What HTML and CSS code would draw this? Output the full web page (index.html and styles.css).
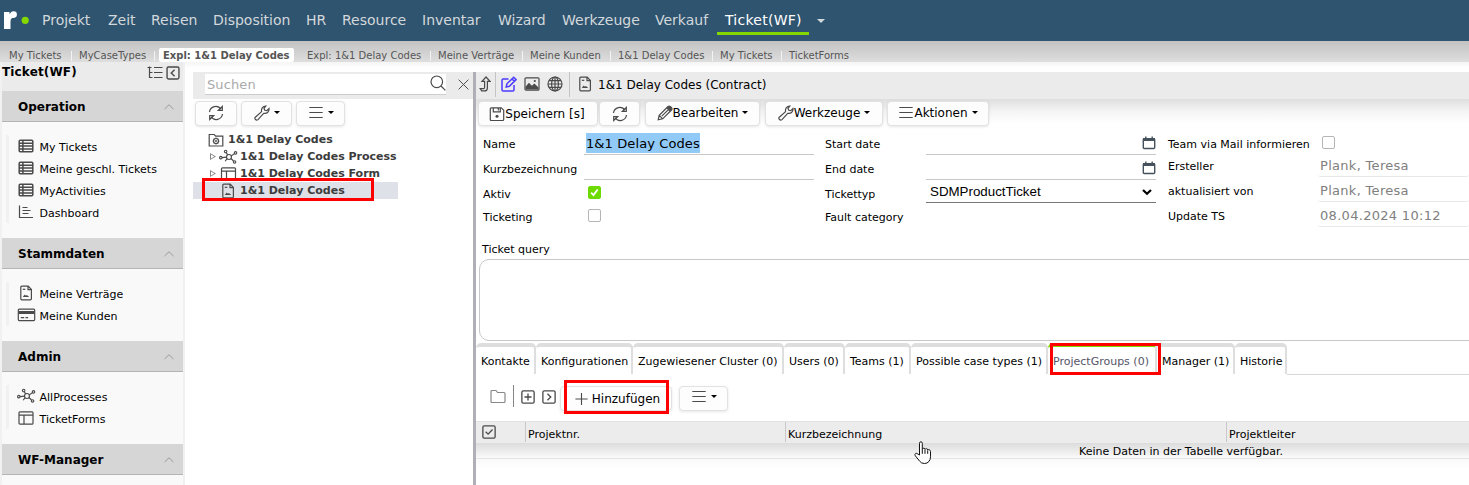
FILE: index.html
```
<!DOCTYPE html>
<html lang="de">
  <head>
    <meta charset="UTF-8" />
    <meta name="viewport" content="width=device-width, initial-scale=1.0" />
    <title>1&amp;1 Delay Codes (Contract)</title>
    <link rel="stylesheet" href="styles.css">
  </head>
  <body>
    <!-- icon set -->
    <svg class="sprite" aria-hidden="true">
      <symbol id="refresh" viewBox="0 0 16 16">
        <path d="M1.5 7A6.3 6.3 0 0 1 13 4.3M14.5 9A6.3 6.3 0 0 1 3 11.7" />
        <path d="M14.3 1.5v4h-4zM1.7 14.5v-4h4z" />
      </symbol>
      <symbol id="wrench" viewBox="0 0 16 16">
        <path d="M1.3 12.2 7.6 6.6C7 4 8.6 1.2 11.8 1L10 3.3l.8 2 2 .4L15 3.6c.4 3.4-2.4 5.4-5.3 4.7L4 14.6c-1.8 1.4-4-.8-2.7-2.4z" />
      </symbol>
      <symbol id="menu" viewBox="0 0 16 16">
        <path d="M1.3 2.5h13.4M1.3 7.5h13.4M1.3 12.5h13.4" />
      </symbol>
      <symbol id="table" viewBox="0 0 16 16">
        <rect x="1.2" y="2.2" width="13.6" height="11.6" rx="1" />
        <path d="M1 5.2h14M1 8.1h14M1 11h14M4.9 2v12" />
      </symbol>
      <symbol id="chart" viewBox="0 0 16 16">
        <path d="M1.5 1.5v12H15M4.5 3.5h5M4.5 6.5h8M4.5 9.5h6" />
      </symbol>
      <symbol id="doc" viewBox="0 0 16 16">
        <path d="M3.8 1.2h6.4l3.2 3.3v9.3q0 1-1 1H3.8q-1 0-1-1V2.2q0-1 1-1zM10 1.2v3.5h3.4" />
        <path class="solid" d="M4.8 12l1.9-2.4 1.2 1.2 1-.7 2.3 1.9z" />
        <path d="M4.8 4.3h2.5" />
      </symbol>
      <symbol id="card" viewBox="0 0 18 16">
        <rect x=".8" y="2.2" width="16.4" height="11.4" rx="1" />
        <path class="solid" d="M1 4h16v3H1z" />
        <path d="M3.3 10.7h3.4M8 10.7h2.6" />
      </symbol>
      <symbol id="process" viewBox="0 0 20 16">
        <circle cx="10.5" cy="8" r="2.6" />
        <circle cx="1.9" cy="8.7" r="1.3" />
        <circle cx="7" cy="2.2" r="1.3" />
        <circle cx="17.4" cy="3.7" r="1.3" />
        <circle cx="16.4" cy="13.2" r="1.3" />
        <path d="M3.2 8.6l4.6-.4M7.6 3.4l1.5 2.3M12.9 6.8l3.3-2.3M12.6 9.6l2.7 2.6M8.5 9.7l-2 2.8" />
      </symbol>
      <symbol id="form" viewBox="0 0 16 16">
        <rect x="1" y="1.8" width="14" height="12.4" rx="1" />
        <path d="M1 5.2h14M6 5.2v9" />
      </symbol>
      <symbol id="folderGear" viewBox="0 0 16 16">
        <path d="M1.2 14V2.5h5l1.5 1.7h7.1V14z" />
        <circle cx="8" cy="9" r="2.5" />
        <path d="M8 5.6v1M8 11.4v1M4.6 9h1M10.4 9h1M5.7 6.7l.6.6M9.7 10.7l.6.6M10.3 6.7l-.6.6M6.3 10.7l-.6.6" />
        <circle cx="8" cy="9" r=".4" />
      </symbol>
      <symbol id="folder" viewBox="0 0 16 16">
        <path d="M1 12.5v-10q0-1 1-1h4l1.6 2H14q1 0 1 1v8q0 1-1 1H2q-1 0-1-1z" />
      </symbol>
      <symbol id="search" viewBox="0 0 16 16">
        <circle cx="6.8" cy="6.8" r="5.8" />
        <path d="M11 11l4.4 4.4" />
      </symbol>
      <symbol id="close" viewBox="0 0 16 16">
        <path d="M2 2l12 12M14 2L2 14" />
      </symbol>
      <symbol id="chevron" viewBox="0 0 16 16">
        <path d="M2 10.8 8 5l6 5.8" />
      </symbol>
      <symbol id="treeList" viewBox="0 0 16 16">
        <path d="M2.5 1.5v11h3M2.5 7.5h3M.5 2.5h4M7 2.5h8.500M7 7.5h8.500M7 12.5h8.500" />
      </symbol>
      <symbol id="boxLeft" viewBox="0 0 16 16">
        <rect x="1.2" y="1.2" width="13.6" height="13.6" rx="1.6" />
        <path d="M9.8 4.3 6 8l3.8 3.7" />
      </symbol>
      <symbol id="boxRight" viewBox="0 0 16 16">
        <rect x="1" y="1" width="14" height="14" rx="1.6" />
        <path d="M6.2 4.3 10 8l-3.8 3.7" />
      </symbol>
      <symbol id="boxPlus" viewBox="0 0 16 16">
        <rect x="1" y="1" width="14" height="14" rx="1.6" />
        <path d="M8 4v8M4 8h8" />
      </symbol>
      <symbol id="boxCheck" viewBox="0 0 16 16">
        <rect x="1" y="1" width="14" height="14" rx="1.6" />
        <path d="M4.2 7.7 7 10.4l5-5.3" />
      </symbol>
      <symbol id="plus" viewBox="0 0 16 16">
        <path d="M8 1.5v13M1.5 8h13" />
      </symbol>
      <symbol id="levelUp" viewBox="0 0 12 16">
        <path d="M7 1 3 5.3h2.6v6.2q0 1.2-1.2 1.2H1.2l1.5 2.2h2.7q3 0 3-3V5.3H11z" />
      </symbol>
      <symbol id="edit" viewBox="0 0 16 16">
        <path d="M7.5 3H2.2Q1 3 1 4.2v9.6Q1 15 2.2 15h9.6q1.2 0 1.2-1.2V9" />
        <path d="M5.2 11l.7-3.2 6.8-6.5 2.3 2.3-6.6 6.7zM11 3l2.3 2.3" />
      </symbol>
      <symbol id="image" viewBox="0 0 16 16">
        <rect x="1" y="1.8" width="14" height="12.4" rx="1" />
        <path class="solid" d="M1.5 13.5v-2.7l3.4-4 3 3 2.5-2.2 4.1 3.9v2z" />
        <circle class="solid" cx="10.8" cy="5" r="1.1" />
      </symbol>
      <symbol id="globe" viewBox="0 0 16 16">
        <circle cx="8" cy="8" r="7" />
        <ellipse cx="8" cy="8" rx="3.4" ry="7" />
        <path d="M8 1v14M1 8h14M2 4.6h12M2 11.4h12" />
      </symbol>
      <symbol id="save" viewBox="0 0 16 16">
        <path d="M2.3 1.8h10l2.4 2.4v9.3q0 1-1 1H2.3q-1 0-1-1V2.8q0-1 1-1zM4.3 1.8v4.1h7V1.8M9.3 2.5v2" />
        <circle class="solid" cx="8" cy="10.2" r="1.5" />
      </symbol>
      <symbol id="pencil" viewBox="0 0 16 16">
        <path d="M1.2 14.8l1-4.5L11 1.5q1.2-1 2.3 0l1.2 1.2q1 1.2 0 2.3l-8.8 8.8zM2.2 10.3l3.5 3.5M9.8 2.8l3.5 3.5M4.8 11.2l6.4-6.4" />
        <path class="solid" d="M10 2.6l1.8-1.4 1.4.1 1.5 1.8-.2 1.5-1.2 1.4z" />
      </symbol>
      <symbol id="calendar" viewBox="0 0 14 14">
        <path d="M2.3 2.7h9.4q1 0 1 1v7.8q0 1-1 1H2.3q-1 0-1-1V3.7q0-1 1-1z" />
        <path class="solid" d="M1 2h12v3H1z" />
        <path d="M3.8.5v2M10.2.5v2" />
      </symbol>
    </svg>

    <header class="mainNav">
      <svg class="logo" viewBox="0 0 28 20">
        <path class="logoR" d="M1 1h5.500v2L9 1.500l2.500 5q-4 0-4 4V18H1z" />
        <circle class="logoR" cx="10.600" cy="3.600" r="3.300" />
        <circle class="logoDot" cx="22.200" cy="9.300" r="3.600" />
      </svg>
      <nav class="navItems">
        <a>Projekt</a>
        <a>Zeit</a>
        <a>Reisen</a>
        <a>Disposition</a>
        <a>HR</a>
        <a>Resource</a>
        <a>Inventar</a>
        <a>Wizard</a>
        <a>Werkzeuge</a>
        <a>Verkauf</a>
        <a class="active">Ticket(WF)</a>
      </nav>
      <span class="caret"></span>
    </header>

    <div class="history">
      <a>My Tickets</a>
      <a>MyCaseTypes</a>
      <a class="current">Expl: 1&amp;1 Delay Codes</a>
      <a>Expl: 1&amp;1 Delay Codes</a>
      <a>Meine Verträge</a>
      <a>Meine Kunden</a>
      <a>1&amp;1 Delay Codes</a>
      <a>My Tickets</a>
      <a>TicketForms</a>
    </div>

    <div class="workspace">
      <aside class="sidebar">
        <div class="sideTitle">
          <span>Ticket(WF)</span>
          <svg class="icon"><use href="#treeList" /></svg>
          <svg class="icon dark"><use href="#boxLeft" /></svg>
        </div>
        <h2>Operation <svg><use href="#chevron" /></svg></h2>
        <ul>
          <li><svg class="icon bold"><use href="#table" /></svg>My Tickets</li>
          <li><svg class="icon bold"><use href="#table" /></svg>Meine geschl. Tickets</li>
          <li><svg class="icon bold"><use href="#table" /></svg>MyActivities</li>
          <li><svg class="icon"><use href="#chart" /></svg>Dashboard</li>
        </ul>
        <h2>Stammdaten <svg><use href="#chevron" /></svg></h2>
        <ul>
          <li><svg class="icon"><use href="#doc" /></svg>Meine Verträge</li>
          <li><svg class="icon wide"><use href="#card" /></svg>Meine Kunden</li>
        </ul>
        <h2>Admin <svg><use href="#chevron" /></svg></h2>
        <ul>
          <li><svg class="icon wide"><use href="#process" /></svg>AllProcesses</li>
          <li><svg class="icon"><use href="#form" /></svg>TicketForms</li>
        </ul>
        <h2>WF-Manager <svg><use href="#chevron" /></svg></h2>
      </aside>

      <section class="explorer">
        <div class="searchBar">
          <div class="searchField">
            <span>Suchen</span>
            <svg class="icon"><use href="#search" /></svg>
          </div>
          <svg class="icon closeIcon"><use href="#close" /></svg>
        </div>
        <div class="treeButtons">
          <button class="btn"><svg class="icon"><use href="#refresh" /></svg></button>
          <button class="btn"><svg class="icon"><use href="#wrench" /></svg><i class="caret"></i></button>
          <button class="btn"><svg class="icon"><use href="#menu" /></svg><i class="caret"></i></button>
        </div>
        <div class="tree">
          <div class="node root"><svg class="icon"><use href="#folderGear" /></svg>1&amp;1 Delay Codes</div>
          <div class="node"><i class="expander"></i><svg class="icon wide"><use href="#process" /></svg>1&amp;1 Delay Codes Process</div>
          <div class="node"><i class="expander"></i><svg class="icon wide"><use href="#form" /></svg>1&amp;1 Delay Codes Form</div>
          <div class="node selected"><svg class="icon wide"><use href="#doc" /></svg>1&amp;1 Delay Codes<span class="mark markNode"></span></div>
        </div>
      </section>

      <main class="detail">
        <div class="detailHead">
          <span class="group up"><svg class="icon"><use href="#levelUp" /></svg></span>
          <span class="group tools">
            <svg class="icon blue"><use href="#edit" /></svg>
            <svg class="icon"><use href="#image" /></svg>
            <svg class="icon"><use href="#globe" /></svg>
          </span>
          <svg class="icon"><use href="#doc" /></svg>
          <span class="docTitle">1&amp;1 Delay Codes (Contract)</span>
        </div>

        <div class="actions">
          <button class="btn"><svg class="icon"><use href="#save" /></svg>Speichern [s]</button>
          <button class="btn"><svg class="icon"><use href="#refresh" /></svg></button>
          <button class="btn"><svg class="icon"><use href="#pencil" /></svg>Bearbeiten<i class="caret"></i></button>
          <button class="btn"><svg class="icon"><use href="#wrench" /></svg>Werkzeuge<i class="caret"></i></button>
          <button class="btn"><svg class="icon"><use href="#menu" /></svg>Aktionen<i class="caret"></i></button>
        </div>

        <div class="form">
          <div class="formCol colName">
            <label>Name</label>
            <div class="field"><span class="selection">1&amp;1 Delay Codes</span></div>
            <label>Kurzbezeichnung</label>
            <div class="field"></div>
            <label>Aktiv</label>
            <div><span class="check checked"><svg viewBox="0 0 13 13"><path d="M2.5 6.7l2.8 2.8 5-6.5" /></svg></span></div>
            <label>Ticketing</label>
            <div><span class="check"></span></div>
          </div>
          <div class="formCol colDate">
            <label>Start date</label>
            <div class="field"><svg class="cal"><use href="#calendar" /></svg></div>
            <label>End date</label>
            <div class="field"><svg class="cal"><use href="#calendar" /></svg></div>
            <label>Tickettyp</label>
            <div class="field select">SDMProductTicket<svg viewBox="0 0 12 8"><path d="M2 2l4 3.800L10 2" /></svg></div>
            <label>Fault category</label>
            <div></div>
          </div>
          <div class="formCol colMeta">
            <label>Team via Mail informieren</label>
            <div><span class="check"></span></div>
            <label>Ersteller</label>
            <div class="field readonly">Plank, Teresa</div>
            <label>aktualisiert von</label>
            <div class="field readonly">Plank, Teresa</div>
            <label>Update TS</label>
            <div class="field readonly">08.04.2024 10:12</div>
          </div>
        </div>

        <label class="queryLabel">Ticket query</label>
        <div class="query"></div>

        <div class="tabs">
          <a>Kontakte</a>
          <a>Konfigurationen</a>
          <a>Zugewiesener Cluster (0)</a>
          <a>Users (0)</a>
          <a>Teams (1)</a>
          <a>Possible case types (1)</a>
          <a class="active">ProjectGroups (0)<span class="mark markTab"></span></a>
          <a>Manager (1)</a>
          <a>Historie</a>
          <span class="tabLine"></span>
        </div>

        <div class="tableTools">
          <svg class="icon folder"><use href="#folder" /></svg>
          <span class="divider"></span>
          <svg class="icon box"><use href="#boxPlus" /></svg>
          <svg class="icon box"><use href="#boxRight" /></svg>
          <button class="btn add"><svg class="icon"><use href="#plus" /></svg>Hinzufügen<span class="mark markAdd"></span></button>
          <button class="btn more"><svg class="icon"><use href="#menu" /></svg><i class="caret"></i></button>
        </div>

        <div class="grid">
          <div class="gridHead">
            <span><svg class="icon"><use href="#boxCheck" /></svg></span>
            <span>Projektnr.</span>
            <span>Kurzbezeichnung</span>
            <span>Projektleiter</span>
          </div>
          <div class="gridEmpty">Keine Daten in der Tabelle verfügbar.</div>
          <div class="gridShadow"></div>
        </div>
      </main>
    </div>

    <svg class="cursor" viewBox="0 0 18 24">
      <path d="M5.5 14V2.3q0-1.5 1.4-1.500t1.400 1.500v6q.3-1.200 1.500-1.100 1.200.1 1.200 1.300.4-1 1.500-.8 1.200.2 1.200 1.400.5-.7 1.500-.4 1.300.4 1.300 1.800v5.300q0 3-1.700 4.800-1.500 1.900-4.300 1.900-3.300 0-4.800-2.300L1.300 14.800q-.9-1.500.3-2.300 1.200-.6 2.300.6zM8.300 8.300v4.500M11 9v3.800M13.700 9.500v3.300" />
    </svg>
  </body>
</html>
```
FILE: styles.css
```
* {
  box-sizing: border-box;
}

body {
  margin: 0;
  height: 485px;
  overflow: hidden;
  background: #fff;
  color: #000;
  font-family: Verdana, "DejaVu Sans", sans-serif;
  font-size: 11px;
}

svg {
  flex: none;
  fill: none;
  stroke: currentColor;
}

.sprite {
  position: absolute;
  width: 0;
  height: 0;
}

.solid {
  fill: currentColor;
  stroke: none;
}

.icon {
  width: 16px;
  height: 16px;
  color: #4a4a4a;
  stroke-width: 1.2;
}

.icon.blue {
  color: #4b3cff;
  stroke-width: 1.5;
}

.caret {
  width: 0;
  height: 0;
  border: 3px solid transparent;
  border-top-color: #000;
  border-bottom: 0;
}

/* red highlight frames */
.mark {
  position: absolute;
  border: 3px solid #f00;
}

/* top navigation */
.mainNav {
  display: flex;
  align-items: center;
  height: 41px;
  background: #2f546f;
  color: #d3d8dc;
}

.logo {
  width: 28px;
  height: 20px;
  margin: 0 3px;
  stroke: none;
}

.logoR {
  fill: #fff;
}

.logoDot {
  fill: #84d800;
}

.navItems {
  display: grid;
  grid-template-columns: 66px 43px 62px 93px 36px 80px 76px 64px 93px 70px 92px;
  height: 41px;
  font-size: 14px;
}

.navItems a {
  padding-left: 8px;
  line-height: 40px;
  white-space: nowrap;
}

.navItems .active {
  height: 35px;
  border-bottom: 3px solid #84d800;
  color: #fff;
  letter-spacing: 0.25px;
}

.mainNav .caret {
  margin-left: 8px;
  border-width: 4px 4px 0;
  border-top-color: #d3d8dc;
}

/* recently opened pages */
.history {
  display: grid;
  grid-template-columns: 70px 83px 145px 131px 92px 88px 102px 69px 90px;
  height: 21px;
  padding-left: 2px;
  background: linear-gradient(#c2c2c2, #dedede);
  color: #555;
  font-size: 10px;
}

.history a {
  height: 10px;
  margin-top: 10px;
  padding-left: 7px;
  line-height: 10px;
  white-space: nowrap;
  border-right: 1px solid #f3f3f3;
}

.history .current {
  height: 14px;
  margin: 7px 6px 0 4px;
  padding-left: 4px;
  line-height: 16px;
  background: #fff;
  border: 0;
  border-radius: 2px;
  font-weight: bold;
}

.history a:nth-child(4) {
  margin-left: 1px;
  padding-left: 6px;
}

.history a:last-child {
  border: 0;
}

.workspace {
  display: flex;
  height: 423px;
  background: linear-gradient(#f4f4f4, #fff 6px);
}

/* sidebar */
.sidebar {
  width: 185px;
  border: solid #f1f1f1;
  border-width: 0 2px;
  background: #f9f9f9;
}

.sideTitle {
  display: flex;
  align-items: center;
  height: 29px;
  padding: 0 3px 8px 0;
  background: #ebebeb;
  font-size: 12px;
  font-weight: bold;
}

.sideTitle span {
  flex: 1;
  margin-top: -2px;
  letter-spacing: 0.15px;
}

.sideTitle .icon {
  margin-left: 3px;
}

.sideTitle .dark {
  width: 14px;
  height: 14px;
  stroke-width: 1.6;
}

.sidebar h2 {
  display: flex;
  align-items: center;
  justify-content: space-between;
  height: 31px;
  margin: 0;
  padding: 2px 8px 0 16px;
  background: #d6d6d6;
  border-bottom: 1px solid #b4b4b4;
  font-size: 12px;
}

.sidebar h2 svg {
  width: 12px;
  height: 12px;
  color: #888;
}

.sidebar ul {
  margin: 13px 4px 15px;
  padding: 0 0 0 9px;
  border-left: 3px solid #f1f1f1;
  list-style: none;
}

.sidebar li {
  display: flex;
  align-items: center;
  height: 22px;
  padding-top: 2px;
  white-space: nowrap;
}

.sidebar li .icon {
  margin: 0 5.5px 3px 0;
}

.sidebar li .wide {
  width: 19px;
  margin: 0 3.5px 3px -1px;
}

.sidebar .bold {
  stroke-width: 1.5;
}

/* buttons */
.btn {
  position: relative;
  display: flex;
  align-items: center;
  justify-content: center;
  height: 25px;
  padding: 0;
  background: #fdfdfd;
  border: 1px solid #e2e2e2;
  border-radius: 4px;
  box-shadow: 0 1px 3px rgba(0, 0, 0, 0.1);
  color: #000;
  font-family: inherit;
  font-size: 12px;
  white-space: nowrap;
}

.btn .caret {
  margin-left: 4px;
}

/* explorer tree */
.explorer {
  width: 280px;
  margin: 10px 0 0 8px;
}

.searchBar {
  display: flex;
  height: 27px;
  padding: 2px 3px 0 12px;
  background: #ebebeb;
}

.searchField {
  display: flex;
  align-items: center;
  width: 241px;
  height: 21px;
  padding-left: 2px;
  background: #fff;
  border-bottom: 1px solid #ccc;
  color: #aaa;
  font-size: 13px;
}

.searchField span {
  flex: 1;
  letter-spacing: 0.1px;
}

.searchField .icon {
  margin-bottom: 2px;
}

.closeIcon {
  width: 13px;
  height: 13px;
  margin: 4px 0 0 auto;
}

.treeButtons {
  display: grid;
  grid-template-columns: 42px 51px 49px;
  gap: 4px;
  padding: 2px 2px 0;
}

.treeButtons .btn {
  padding-bottom: 2px;
}

.tree {
  width: 205px;
  margin-top: 5px;
  color: #3c3c3c;
  font-weight: bold;
}

.node {
  display: flex;
  align-items: center;
  position: relative;
  height: 17px;
  padding-left: 18px;
  white-space: nowrap;
}

.node .icon {
  margin-right: 4px;
}

.node .wide {
  width: 19px;
  margin-right: 2px;
}

.root {
  padding-left: 15px;
}

.selected {
  padding-left: 27px;
  background: #dee1e7;
}

.selected .wide {
  width: 16px;
  margin-right: 4px;
}

.expander {
  width: 6px;
  height: 7px;
  margin: 0 3px 0 -1px;
  background: #888;
  clip-path: polygon(evenodd, 0 0, 100% 50%, 0 100%, 0 0, 1px 1.6px, 1px 5.4px, 4.3px 3.5px, 1px 1.6px);
}

.markNode {
  top: -4px;
  left: 9px;
  width: 172px;
  height: 23px;
}

/* detail pane */
.detail {
  flex: 1;
  min-width: 0;
  margin-top: 10px;
  border-left: 3px solid #b0afb5;
}

.detailHead {
  display: flex;
  align-items: center;
  height: 27px;
  padding-bottom: 3px;
  background: #ebebeb;
}

.group {
  display: flex;
  align-items: center;
  height: 25px;
  border-right: 1px solid #c4c4c4;
}

.up {
  width: 20px;
  padding-left: 3px;
}

.up .icon {
  width: 12px;
}

.tools {
  gap: 7px;
  width: 74px;
  margin-right: 7px;
  padding-left: 5px;
}

.docTitle {
  margin: 1px 0 0 5px;
  font-size: 12px;
}

.actions {
  display: grid;
  grid-template-columns: 120px 41px 115px 118px 102px;
  height: 33px;
  padding: 2px 0 0 2px;
  background: linear-gradient(#dedede, #f4f4f4 12px, #fff 24px);
}

.actions .btn:nth-child(1) {
  padding-right: 2px;
}

.actions .btn:nth-child(2) {
  margin-left: 1px;
  margin-right: -1px;
}

.actions .btn:nth-child(3) {
  margin-left: 6px;
  margin-right: -6px;
}

.actions .btn:nth-child(4) {
  margin-left: 11px;
  margin-right: -11px;
}

.actions .btn:nth-child(5) {
  margin-left: 15px;
  margin-right: -15px;
}

.actions .btn:nth-child(n + 3) {
  padding-bottom: 2px;
}

.form {
  display: grid;
  grid-template-columns: 342px 342px 1fr;
  height: 109px;
  padding-left: 7px;
}

.formCol {
  display: grid;
  grid-template-columns: 101px 230px;
  grid-template-rows: 25px 25px 23px 24px;
  line-height: 25px;
}

.colMeta {
  grid-template-columns: 150px 1fr;
  grid-template-rows: 22px 25px 25px 25px;
  padding-left: 1px;
}

.formCol label {
  white-space: nowrap;
}

.field {
  height: 23px;
  border-bottom: 1px solid #c8c8c8;
  font-size: 13px;
  line-height: 22px;
}

.selection {
  display: block;
  width: 114px;
  height: 20px;
  margin: 1px 0 0 2px;
  line-height: 21px;
  background: #91c9f7;
  letter-spacing: 0.1px;
  white-space: nowrap;
}

.check {
  display: block;
  width: 13px;
  height: 13px;
  margin: 4px 0 0 4px;
  background: #fff;
  border: 1px solid #b5b5b5;
  border-radius: 2px;
}

.checked {
  background: #6edb00;
  border-color: #6edb00;
}

.checked svg {
  display: block;
  width: 11px;
  height: 11px;
  color: #fff;
  stroke-width: 2.2;
}

.cal {
  display: block;
  width: 14px;
  height: 14px;
  margin: 4px 0 0 auto;
  color: #45525e;
  stroke-width: 1.4;
}

.select {
  display: flex;
  align-items: center;
  justify-content: space-between;
  height: 21px;
  padding: 0 3px 0 4px;
  border-color: #777;
  font-family: "Liberation Sans", Arial, sans-serif;
  font-size: 13.333px;
}

.select svg {
  width: 12px;
  height: 8px;
  stroke-width: 2.2;
}

.readonly {
  padding-left: 2px;
  border-color: #e8e8e8;
  border-radius: 3px;
  color: #808080;
  letter-spacing: 0.3px;
  line-height: 24px;
}

.queryLabel {
  display: block;
  height: 18px;
  padding-left: 6px;
  line-height: 17px;
}

.query {
  height: 82px;
  margin: 0 -12px 2px 3px;
  border: 1px solid #c8c8c8;
  border-radius: 10px;
}

.tabs {
  display: grid;
  grid-template-columns: 60px 97px 151px 61px 66px 137px 109px 78px 52px 1fr;
  height: 32px;
}

.tabs a {
  position: relative;
  height: 31px;
  padding-left: 5px;
  border: solid #dedede;
  border-width: 4px 2px 0 0;
  border-radius: 5px 5px 0 0;
  line-height: 29px;
  white-space: nowrap;
}

.tabs .active {
  z-index: 1;
  border-top-color: #84d800;
  color: #556;
}

.tabLine {
  height: 32px;
  border-bottom: 1px solid #d8d8dc;
}

.markTab {
  top: -4px;
  left: 2px;
  width: 111px;
  height: 32px;
}

.tableTools {
  display: flex;
  height: 46px;
  padding: 11px 0 0 14px;
}

.folder {
  margin-top: 3px;
  color: #888;
}

.divider {
  width: 1px;
  height: 22px;
  margin: -1px 7px 0 7px;
  background: #888;
}

.box {
  width: 14px;
  height: 14px;
  margin: 4px 7px 0 0;
  stroke-width: 1.5;
}

.add {
  width: 112px;
  margin-left: -3px;
  padding-left: 2px;
}

.add .icon {
  width: 15px;
  margin-right: 3px;
}

.markAdd {
  top: -7px;
  left: 3px;
  width: 105px;
  height: 34px;
}

.more {
  width: 49px;
  margin-left: 7px;
  padding-bottom: 4px;
}

.gridHead {
  display: grid;
  grid-template-columns: 50px 260px 441px 1fr;
  height: 22px;
  background: #ececec;
  border-top: 1px solid #e2e2e2;
  line-height: 25px;
}

.gridHead span {
  height: 20px;
  padding-left: 2px;
  border-right: 1px solid #c8c8c8;
}

.gridHead span:last-child {
  border: 0;
}

.gridHead .icon {
  display: block;
  width: 14px;
  height: 14px;
  margin: 3px 0 0 4px;
  stroke-width: 1.5;
}

.gridEmpty {
  height: 16px;
  padding-left: 603px;
  background: linear-gradient(#dcdcdc, #fafafa);
  border-bottom: 1px solid #e4e4e4;
  line-height: 17px;
}

.gridShadow {
  height: 10px;
  background: linear-gradient(#f9f9f9, #fff);
}

.cursor {
  position: absolute;
  top: 441px;
  left: 914px;
  width: 18px;
  height: 24px;
  fill: #fff;
  stroke: #111;
}
```
